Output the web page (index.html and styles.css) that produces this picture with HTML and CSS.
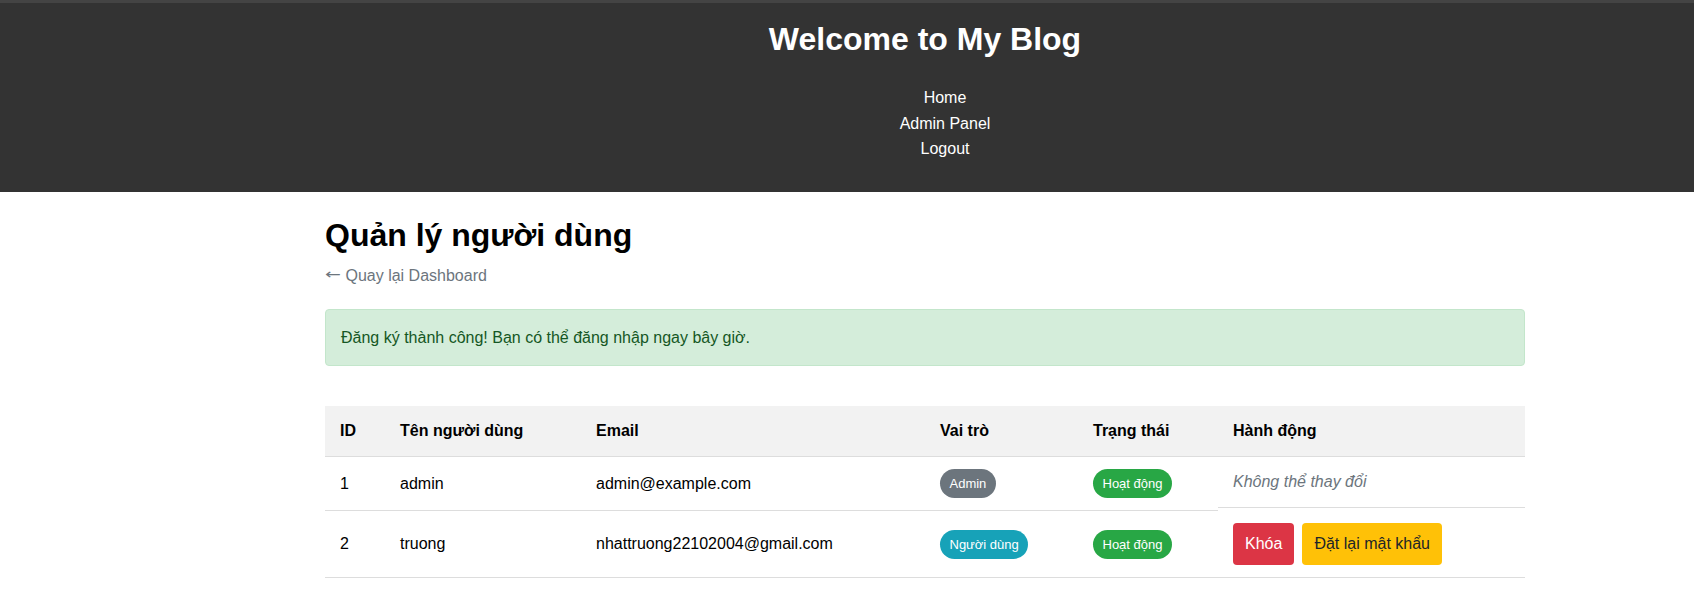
FILE: index.html
```html
<!DOCTYPE html>
<html lang="vi">
<head>
<meta charset="utf-8">
<title>Quản lý người dùng</title>
<link rel="stylesheet" href="styles.css">
</head>
<body>
<header class="site-header">
  <div class="wrap">
    <h1 class="site-title">Welcome to My Blog</h1>
    <nav>
      <ul class="nav-list">
        <li><a href="#">Home</a></li>
        <li><a href="#">Admin Panel</a></li>
        <li><a href="#">Logout</a></li>
      </ul>
    </nav>
  </div>
</header>
<main class="wrap main">
  <h2 class="page-title">Quản lý người dùng</h2>
  <a class="back-link" href="#"><span class="arrow">←</span> Quay lại Dashboard</a>
  <div class="alert">Đăng ký thành công! Bạn có thể đăng nhập ngay bây giờ.</div>
  <table class="users">
    <colgroup>
      <col class="c-id"><col class="c-name"><col class="c-email"><col class="c-role"><col class="c-status"><col class="c-act">
    </colgroup>
    <thead>
      <tr><th>ID</th><th>Tên người dùng</th><th>Email</th><th>Vai trò</th><th>Trạng thái</th><th>Hành động</th></tr>
    </thead>
    <tbody>
      <tr>
        <td>1</td><td>admin</td><td>admin@example.com</td>
        <td><span class="badge badge-admin">Admin</span></td>
        <td><span class="badge badge-active">Hoạt động</span></td>
        <td class="actions"><em class="muted">Không thể thay đổi</em></td>
      </tr>
      <tr>
        <td>2</td><td>truong</td><td>nhattruong22102004@gmail.com</td>
        <td><span class="badge badge-user">Người dùng</span></td>
        <td><span class="badge badge-active">Hoạt động</span></td>
        <td class="actions"><button class="btn btn-danger">Khóa</button><button class="btn btn-warning">Đặt lại mật khẩu</button></td>
      </tr>
    </tbody>
  </table>
</main>
</body>
</html>
```

FILE: styles.css
```css
* { box-sizing: border-box; }
html, body { margin: 0; padding: 0; background: #fff; }
body {
  font-family: "Liberation Sans", Arial, sans-serif;
  font-size: 16px;
  line-height: 1.6;
  color: #000;
}
.wrap {
  width: 1200px;
  margin-left: calc(50% - 522px);
}
.site-header {
  background: #333;
  color: #fff;
  border-top: 3px solid #444;
  padding: 11px 0 30px;
}
.site-title {
  margin: 0;
  font-size: 32px;
  line-height: 51.2px;
  text-align: center;
}
.nav-list {
  list-style: none;
  margin: 20px 0 0;
  padding: 0 0 0 40px;
  text-align: center;
}
.nav-list a { color: #fff; text-decoration: none; }
.main { padding-top: 18px; }
.page-title {
  margin: 0 0 2px;
  font-size: 32px;
  line-height: 51.2px;
  color: #000;
}
.back-link {
  display: block;
  color: #6c757d;
  text-decoration: none;
}
.arrow {
  display: inline-block;
  width: 16px;
  font-family: "DejaVu Sans", sans-serif;
  font-size: 19px;
  line-height: 1;
  transform: scaleY(0.75);
}
.alert {
  margin: 20px 0 20px;
  padding: 15px;
  background: #d4edda;
  border: 1px solid #c3e6cb;
  border-radius: 4px;
  color: #155724;
}
.users {
  width: 1200px;
  margin-top: 40px;
  border-collapse: collapse;
  table-layout: fixed;
}
.c-id { width: 60px; }
.c-name { width: 196px; }
.c-email { width: 344px; }
.c-role { width: 153px; }
.c-status { width: 140px; }
.c-act { width: 307px; }
.users th, .users td {
  padding: 12px 15px;
  text-align: left;
  border-bottom: 1px solid #ddd;
}
.users th { background: #f2f2f2; font-weight: bold; }
.users td.actions {
  display: flex;
  gap: 8px;
  align-items: center;
}
.muted { color: #6c757d; font-style: italic; }
.badge {
  display: inline-block;
  padding: 4px 9.5px;
  border-radius: 15px;
  font-size: 13px;
  font-weight: normal;
  line-height: 21.5px;
  color: #fff;
}
.badge-admin { background: #6c757d; }
.badge-user { background: #17a2b8; }
.badge-active { background: #28a745; }
.btn {
  font-family: inherit;
  font-size: 16px;
  line-height: 1.6;
  padding: 8px 12px;
  border: none;
  border-radius: 4px;
  cursor: pointer;
}
.btn-danger { background: #dc3545; color: #fff; }
.btn-warning { background: #ffc107; color: #212529; }
```
